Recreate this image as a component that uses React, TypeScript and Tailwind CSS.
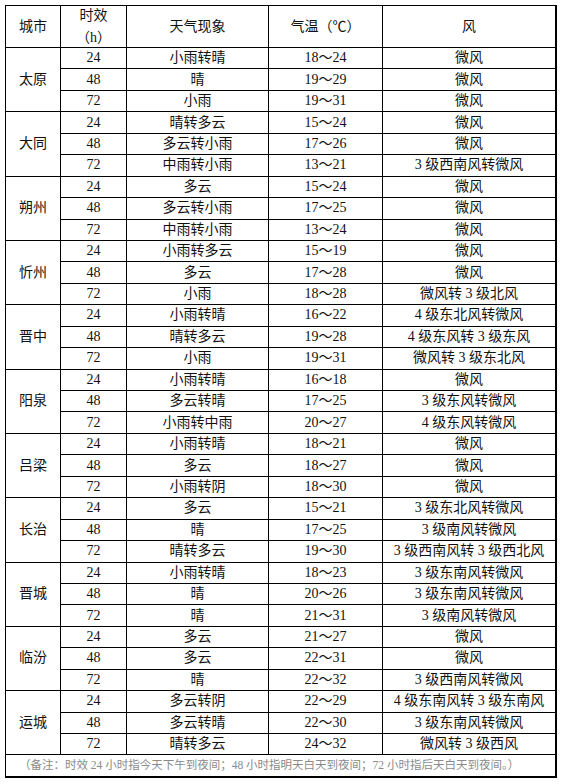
import React from "react";

type Row = [string, string, string, string];
type City = { name: string; rows: Row[] };

const data: City[] = [
  { name: "太原", rows: [["24", "小雨转晴", "18～24", "微风"], ["48", "晴", "19～29", "微风"], ["72", "小雨", "19～31", "微风"]] },
  { name: "大同", rows: [["24", "晴转多云", "15～24", "微风"], ["48", "多云转小雨", "17～26", "微风"], ["72", "中雨转小雨", "13～21", "3 级西南风转微风"]] },
  { name: "朔州", rows: [["24", "多云", "15～24", "微风"], ["48", "多云转小雨", "17～25", "微风"], ["72", "中雨转小雨", "13～24", "微风"]] },
  { name: "忻州", rows: [["24", "小雨转多云", "15～19", "微风"], ["48", "多云", "17～28", "微风"], ["72", "小雨", "18～28", "微风转 3 级北风"]] },
  { name: "晋中", rows: [["24", "小雨转晴", "16～22", "4 级东北风转微风"], ["48", "晴转多云", "19～28", "4 级东风转 3 级东风"], ["72", "小雨", "19～31", "微风转 3 级东北风"]] },
  { name: "阳泉", rows: [["24", "小雨转晴", "16～18", "微风"], ["48", "多云转晴", "17～25", "3 级东风转微风"], ["72", "小雨转中雨", "20～27", "4 级东风转微风"]] },
  { name: "吕梁", rows: [["24", "小雨转晴", "18～21", "微风"], ["48", "多云", "18～27", "微风"], ["72", "小雨转阴", "18～30", "微风"]] },
  { name: "长治", rows: [["24", "多云", "15～21", "3 级东北风转微风"], ["48", "晴", "17～25", "3 级南风转微风"], ["72", "晴转多云", "19～30", "3 级西南风转 3 级西北风"]] },
  { name: "晋城", rows: [["24", "小雨转晴", "18～23", "3 级东南风转微风"], ["48", "晴", "20～26", "3 级东南风转微风"], ["72", "晴", "21～31", "3 级南风转微风"]] },
  { name: "临汾", rows: [["24", "多云", "21～27", "微风"], ["48", "多云", "22～31", "微风"], ["72", "晴", "22～32", "3 级西南风转微风"]] },
  { name: "运城", rows: [["24", "多云转阴", "22～29", "4 级东南风转 3 级东南风"], ["48", "多云转晴", "22～30", "3 级东南风转微风"], ["72", "晴转多云", "24～32", "微风转 3 级西风"]] },
];

const cell = "bg-white flex items-center justify-center leading-none whitespace-nowrap";

export default function App() {
  return (
    <div className="w-[561px] h-[784px] bg-white pl-[5px] pt-[5px] text-[14px] text-[#111] font-['Liberation_Serif','Noto_Sans_CJK_SC',serif]">
      <div className="w-[552px] grid grid-cols-[54px_65px_141px_113px_172px] grid-rows-[41px_repeat(33,20.45px)_21px] gap-px bg-black pt-px pl-px pr-[2px] pb-[2px]">
        <div className={cell}>城市</div>
        <div className={cell + " flex-col gap-[6px]"}>
          <span>时效</span>
          <span className="font-['Noto_Sans_CJK_SC',sans-serif]">（<span className="font-['Liberation_Serif',serif]">h</span>）</span>
        </div>
        <div className={cell}>天气现象</div>
        <div className={cell}>气温（℃）</div>
        <div className={cell}>风</div>
        {data.map((c) => (
          <React.Fragment key={c.name}>
            <div className={cell + " row-span-3"}>{c.name}</div>
            {c.rows.map((r, i) => (
              <React.Fragment key={i}>
                <div className={cell}>{r[0]}</div>
                <div className={cell}>{r[1]}</div>
                <div className={cell}>{r[2]}</div>
                <div className={cell}>{r[3]}</div>
              </React.Fragment>
            ))}
          </React.Fragment>
        ))}
        <div className="bg-white col-span-5 flex items-center justify-start pl-[13px] leading-none whitespace-nowrap text-[11.5px] text-[#8a8a8a]">
          （备注：时效 24 小时指今天下午到夜间；48 小时指明天白天到夜间；72 小时指后天白天到夜间。）
        </div>
      </div>
    </div>
  );
}
